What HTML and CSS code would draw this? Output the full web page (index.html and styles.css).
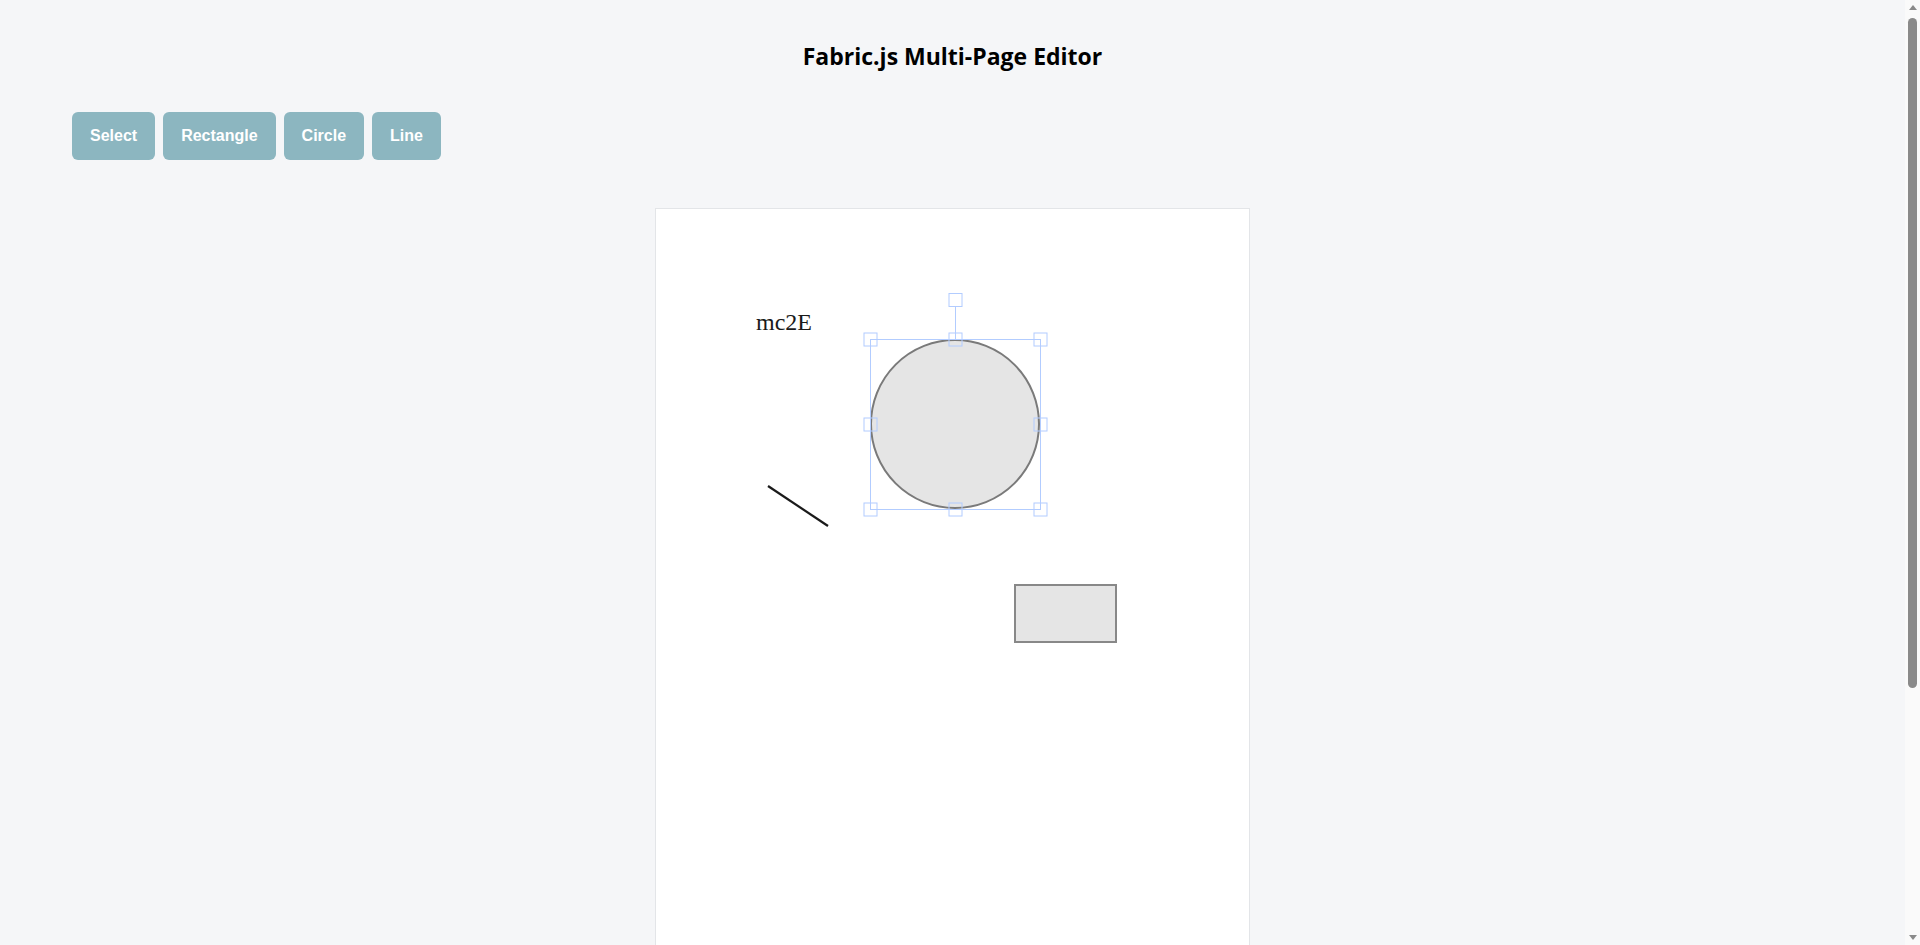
FILE: index.html
```html
<!DOCTYPE html>
<html lang="en">
<head>
<meta charset="utf-8">
<title>Fabric.js Multi-Page Editor</title>
<link rel="stylesheet" href="styles.css">
</head>
<body>
  <h1 class="title">Fabric.js Multi-Page Editor</h1>
  <div class="toolbar">
    <button class="tool">Select</button>
    <button class="tool">Rectangle</button>
    <button class="tool">Circle</button>
    <button class="tool">Line</button>
  </div>
  <div class="workspace">
    <div class="page">
      <svg class="canvas" width="593" height="842" viewBox="1 0 593 842" xmlns="http://www.w3.org/2000/svg">
        <text x="101" y="121" class="itext">mc2E</text>
        <circle cx="300" cy="215" r="84" fill="#e5e5e5" stroke="#7a7a7a" stroke-width="2"/>
        <line x1="113" y1="277" x2="173" y2="317" stroke="#1a1a1a" stroke-width="2.2"/>
        <rect x="360" y="376" width="101" height="57" fill="#e5e5e5" stroke="#888" stroke-width="2"/>
        <g fill="none" stroke="rgb(178,204,255)" stroke-width="1">
          <rect x="215.5" y="130.5" width="170" height="170"/>
          <line x1="300.5" y1="98" x2="300.5" y2="130"/>
          <rect x="294" y="84.5" width="13" height="13"/>
          <rect x="209" y="124" width="13" height="13"/>
          <rect x="294" y="124" width="13" height="13"/>
          <rect x="379" y="124" width="13" height="13"/>
          <rect x="209" y="209" width="13" height="13"/>
          <rect x="379" y="209" width="13" height="13"/>
          <rect x="209" y="294" width="13" height="13"/>
          <rect x="294" y="294" width="13" height="13"/>
          <rect x="379" y="294" width="13" height="13"/>
        </g>
      </svg>
    </div>
  </div>
  <div class="scrollbar" aria-hidden="true">
    <span class="arrow arrow-up"></span>
    <span class="thumb"></span>
    <span class="arrow arrow-down"></span>
  </div>
</body>
</html>
```
FILE: styles.css
```css
html, body {
  margin: 0;
  padding: 0;
}
body {
  background: #f5f6f8;
  font-family: "Open Sans", "Noto Sans", sans-serif;
  color: #000;
  margin-right: 15px;
  padding-bottom: 233px;
}
.title {
  margin: 40px 0 0;
  font-size: 23px;
  line-height: 32px;
  font-weight: 700;
  text-align: center;
}
.toolbar {
  display: flex;
  gap: 8px;
  margin-top: 40px;
  padding-left: 72px;
}
.tool {
  font-family: "Liberation Sans", Arial, sans-serif;
  font-size: 16px;
  font-weight: 700;
  line-height: 18px;
  color: #fff;
  background: #8cb6c0;
  border: none;
  border-radius: 6px;
  padding: 15px 18px;
  cursor: pointer;
}
.workspace {
  display: flex;
  justify-content: center;
  margin-top: 48px;
}
.page {
  background: #fff;
  border: 1px solid #e3e5e8;
  line-height: 0;
}
.canvas {
  display: block;
}
.itext {
  font-family: "Liberation Serif", "Times New Roman", serif;
  font-size: 24px;
  fill: #1a1a1a;
}
.scrollbar {
  position: fixed;
  top: 0;
  right: 0;
  bottom: 0;
  width: 15px;
  background: #fafafa;
  display: flex;
  flex-direction: column;
  align-items: center;
}
.arrow {
  width: 0;
  height: 0;
  border-left: 4px solid transparent;
  border-right: 4px solid transparent;
}
.arrow-up {
  margin-top: 5px;
  border-bottom: 5px solid #8a8a8a;
}
.arrow-down {
  margin-top: auto;
  margin-bottom: 5px;
  border-top: 5px solid #8a8a8a;
}
.thumb {
  width: 9px;
  height: 670px;
  margin-top: 8px;
  border-radius: 5px;
  background: #8a8a8a;
}
```
